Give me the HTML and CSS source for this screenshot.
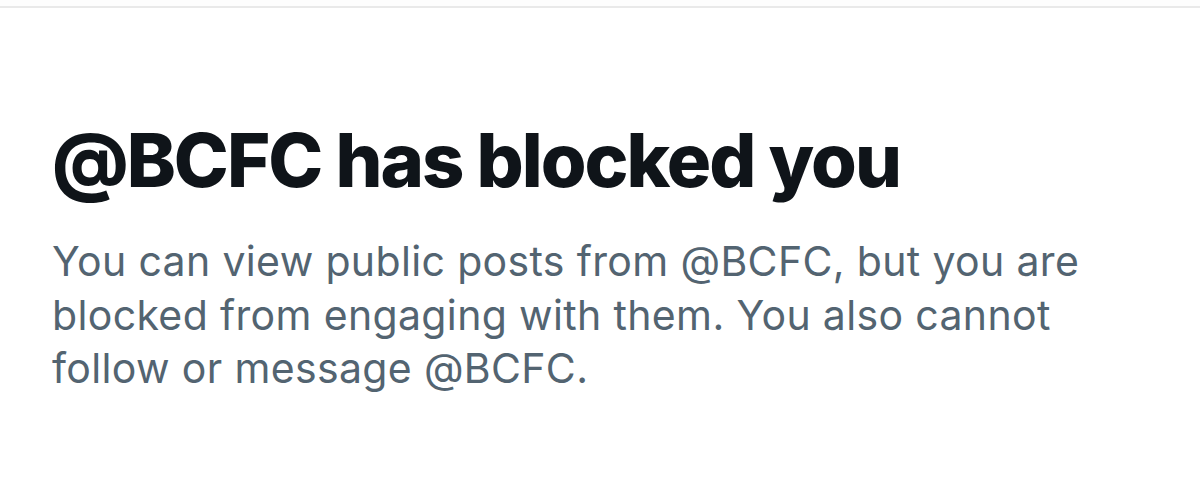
FILE: index.html
```html
<!DOCTYPE html>
<html>
<head>
<meta charset="utf-8">
<link rel="stylesheet" href="styles.css">
</head>
<body>
<div class="topbar"></div>
<main class="blocked">
  <h1 class="title">@BCFC has blocked you</h1>
  <p class="desc">You can view public posts from @BCFC, but you are blocked from engaging with them. You also cannot follow or message @BCFC.</p>
</main>
</body>
</html>
```
FILE: styles.css
```css
html, body {
  margin: 0;
  padding: 0;
  background: #ffffff;
}
body {
  font-family: Inter, "Noto Sans", sans-serif;
  width: 1200px;
  height: 501px;
  overflow: hidden;
}
.topbar {
  height: 6px;
  border-bottom: 2px solid #e9e9e9;
  background: #fdfdfd;
}
.blocked {
  padding: 0 52px;
}
.title {
  margin: 102px 0 0 0;
  font-size: 74px;
  line-height: 100px;
  font-weight: 800;
  color: #0f1419;
  letter-spacing: -2px;
}
.desc {
  margin: 25px 0 0 0;
  width: 1090px;
  font-size: 41px;
  line-height: 53.5px;
  letter-spacing: 0.35px;
  color: #536471;
}
```
